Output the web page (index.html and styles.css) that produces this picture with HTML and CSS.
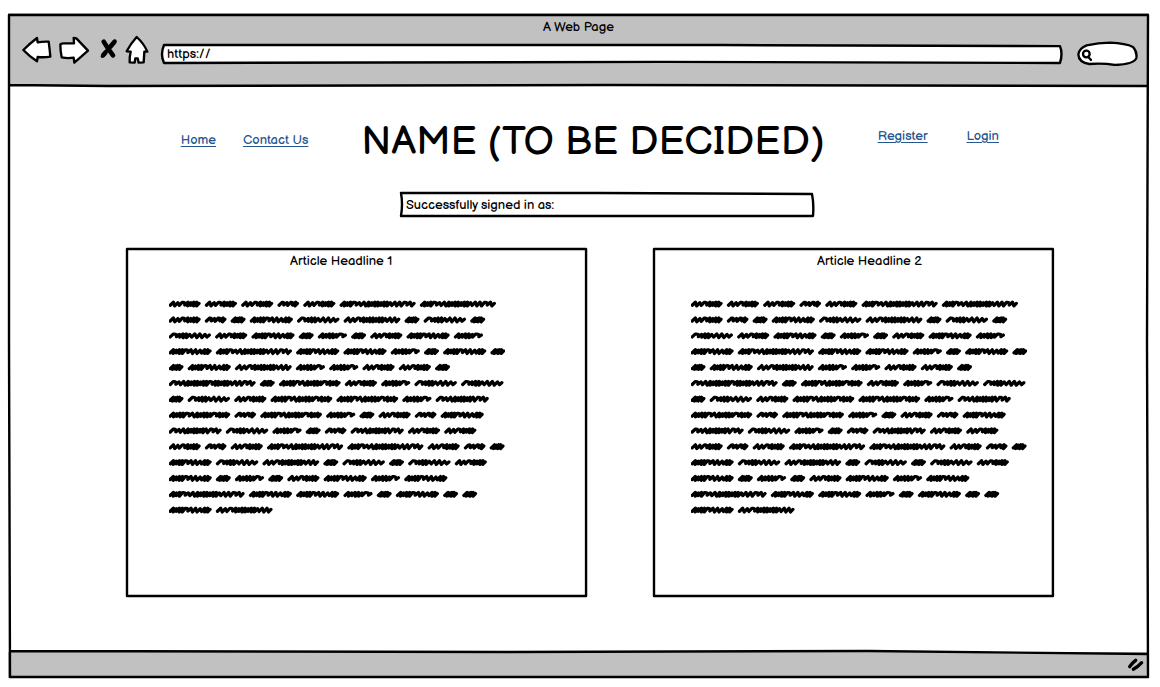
FILE: index.html
```html
<!DOCTYPE html>
<html lang="en">
<head>
<meta charset="utf-8">
<meta name="viewport" content="width=device-width, initial-scale=1">
<title>A Web Page</title>
<link rel="stylesheet" href="styles.css">
</head>
<body>
<div class="window">
  <div class="toolbar">
    <p class="window-title">A Web Page</p>
    <div class="controls">
      <button class="icon-button back" type="button" aria-label="Back">
        <svg class="icon arrow" viewBox="66 105 90 90"><path d="M70 150Q90 130 111 114L113 127Q130 124 146 125Q149 147 151 170Q132 173 113 171L111 184Q88 169 70 150Z"/></svg>
      </button>
      <button class="icon-button forward" type="button" aria-label="Forward">
        <svg class="icon arrow" viewBox="177 105 90 90"><path d="M181 133Q183 130 190 130L222 130L221 114L229 115Q245 132 264 152Q244 170 223 188L221 173Q203 176 185 172Q181 152 181 133Z"/></svg>
      </button>
      <button class="icon-button stop" type="button" aria-label="Stop">
        <svg class="icon cross" viewBox="297 105 60 90"><path class="thick" d="M311 125Q324 147 339 166"/><path d="M345 123Q324 145 307 169"/><path class="thick" d="M343 126L331 140M310 165L316 158"/></svg>
      </button>
      <button class="icon-button home" type="button" aria-label="Home page">
        <svg class="icon house" viewBox="375 105 72 90"><path d="M410 111Q392 131 380 154L392 155Q388 171 389 187L404 188L406 175L413 175L416 188L431 187L433 155L442 155Q432 131 410 111Z"/></svg>
      </button>
      <div class="field address">
        <svg class="frame" viewBox="0 0 900 19" preserveAspectRatio="none" aria-hidden="true"><path d="M3 1L300 1L560 1L897 2Q900 9 897 18L500 17L3 18Q-1 10 3 1Z"/></svg>
        <input class="text-input" type="text" aria-label="Address" value="https://">
      </div>
      <div class="search">
        <svg class="icon pill" viewBox="111 123 183 75" aria-hidden="true"><path d="M115 163Q118 144 140 136Q175 128 210 128Q258 130 279 141Q292 155 289 174Q284 192 225 195Q190 189 148 192Q116 187 115 163Z"/><circle cx="139" cy="162" r="10"/><path d="M145 171L153 180"/></svg>
        <input class="search-input" type="search" aria-label="Search">
      </div>
    </div>
  </div>

  <main class="content">
    <header class="site-header">
      <nav class="links left" aria-label="Main">
        <a href="#home">Home</a>
        <a href="#contact">Contact Us</a>
      </nav>
      <h1 class="site-name">NAME (TO BE DECIDED)</h1>
      <nav class="links right" aria-label="Account">
        <a href="#register">Register</a>
        <a href="#login">Login</a>
      </nav>
    </header>

    <div class="field status">
      <svg class="frame" viewBox="0 0 414 25" preserveAspectRatio="none" aria-hidden="true"><path d="M1 1L200 1L412 2Q414 12 413 24L250 24L1 24Q3 12 1 1Z"/></svg>
      <input class="text-input" type="text" aria-label="Sign-in status" value="Successfully signed in as:">
    </div>

    <div class="articles">
      <article class="card first">
        <svg class="frame" viewBox="0 0 460 348" preserveAspectRatio="none" aria-hidden="true"><path d="M1 1L150 1L459 1L459 180L459 347L230 347L1 347Z"/></svg>
        <h2 class="headline">Article Headline 1</h2>
        <svg class="scribble" viewBox="0 0 336 218" role="img" aria-label="Article text"></svg>
      </article>
      <article class="card second">
        <svg class="frame" viewBox="0 0 400 348" preserveAspectRatio="none" aria-hidden="true"><path d="M1 1L150 1L399 1L399 180L399 347L200 347L1 347Z"/></svg>
        <h2 class="headline">Article Headline 2</h2>
        <svg class="scribble" viewBox="0 0 336 218" role="img" aria-label="Article text"></svg>
      </article>
    </div>
  </main>

  <footer class="status-bar">
    <svg class="icon grip" viewBox="292 238 54 42" aria-hidden="true"><path d="M300 264Q307 253 318 245M311 272Q323 266 336 252"/></svg>
  </footer>

  <svg class="frame" viewBox="0 0 1141 665" preserveAspectRatio="none" aria-hidden="true"><path d="M1 2L570 2L1140 2L1139 330L1140 664L700 664L300 664L2 664L1 330ZM1 72L100 73L600 72L1140 73M1 638L500 639L860 638L1140 641"/></svg>
</div>
<script src="scribble.js"></script>
</body>
</html>
```
FILE: styles.css
```css
* {
  box-sizing: border-box;
}

body {
  margin: 0;
  padding: 13px 11px 9px 8px;
  background: #fff;
  color: #000;
  font-family: "Balsamiq Sans", Inter, "Open Sans", sans-serif;
  font-size: 13px;
  line-height: 16px;
}

.window {
  position: relative;
  display: flex;
  flex-direction: column;
  min-height: calc(100vh - 22px);
}

.frame {
  position: absolute;
  inset: 0;
  width: 100%;
  height: 100%;
  overflow: visible;
  pointer-events: none;
}

.frame path {
  fill: none;
  stroke: #000;
  stroke-width: 2.4;
  stroke-linejoin: round;
  vector-effect: non-scaling-stroke;
}

.icon {
  display: block;
  fill: #fff;
  stroke: #000;
  stroke-width: 7;
  stroke-linecap: round;
  stroke-linejoin: round;
}

.toolbar {
  padding: 6px 11px 20px 14px;
  background: #c1c1c1;
}

.window-title {
  margin: 0;
  padding-right: 3px;
  text-align: center;
}

.controls {
  display: flex;
  align-items: flex-start;
}

.icon-button {
  flex: none;
  padding: 0;
  border: 0;
  background: none;
  height: 30px;
}

.icon-button .icon {
  height: 30px;
}

.back {
  margin-right: 7px;
}

.forward {
  margin-right: 10px;
}

.arrow {
  width: 30px;
}

.cross {
  width: 20px;
}

.cross path {
  fill: none;
  stroke-width: 10;
}

.cross .thick {
  stroke-width: 14;
}

.stop {
  margin-right: 6px;
}

.house {
  width: 24px;
}

.field {
  position: relative;
  display: flex;
}

.field .frame path {
  fill: #fff;
}

.text-input {
  position: relative;
  flex: 1;
  min-width: 0;
  padding: 0 6px;
  border: 0;
  background: none;
  color: inherit;
  font: inherit;
  outline-offset: 2px;
}

.address {
  flex: 1;
  height: 20px;
  margin: 9px 14px 0 12px;
}

.search {
  position: relative;
  flex: none;
  margin-top: 6px;
}

.pill {
  width: 61px;
  height: 25px;
}

.pill circle {
  stroke-width: 7;
}

.search-input {
  position: absolute;
  inset: 4px 6px 4px 18px;
  width: 36px;
  padding: 0;
  border: 0;
  background: none;
  font: inherit;
  appearance: none;
}

.content {
  flex: 1;
  padding: 32px 95px 55px 118px;
}

.site-header {
  display: grid;
  grid-template-columns: 1fr auto 1fr;
  align-items: center;
  column-gap: 53px;
  margin-left: 6px;
}

.site-name {
  margin: 0;
  font-size: 40px;
  font-weight: 500;
  line-height: 48px;
  white-space: nowrap;
}

.links {
  display: flex;
  white-space: nowrap;
}

.links a {
  color: #26568f;
  text-underline-offset: 2px;
}

.left {
  justify-content: flex-end;
  gap: 27px;
  padding-bottom: 4px;
}

.right {
  gap: 39px;
  padding-bottom: 12px;
}

.status {
  width: 45%;
  max-width: 414px;
  height: 25px;
  margin: 26px 240px 31px auto;
}

.articles {
  display: grid;
  grid-template-columns: 460fr 400fr;
  gap: 66px;
}

.card {
  position: relative;
  min-width: 0;
  padding: 5px 20px 80px 43px;
}

.second {
  padding-right: 24px;
  padding-left: 38px;
}

.headline {
  margin: 0 0 30px;
  font-size: 13px;
  font-weight: 400;
  line-height: 16px;
}

.first .headline {
  padding-left: 121px;
}

.second .headline {
  padding-left: 126px;
}

.scribble {
  display: block;
  width: 100%;
  max-width: 336px;
  fill: none;
  stroke: #000;
  stroke-width: 3.3;
  stroke-linecap: round;
  stroke-linejoin: round;
}

.status-bar {
  display: flex;
  justify-content: flex-end;
  align-items: center;
  height: 26px;
  padding-right: 4px;
  background: #c1c1c1;
}

.grip {
  width: 18px;
  height: 14px;
  fill: none;
  stroke-width: 10;
}
```
FILE: scribble.js
```js
// Each letter stands for one scribbled word. The shape string lists its teeth:
// "-" is an open stroke, "=" a tight one, "~" a rounded shoulder.
const words = {
  a: { width: 31, shape: "--~====" },
  b: { width: 20.5, shape: "~-~=" },
  c: { width: 13.8, shape: "===-" },
  d: { width: 42, shape: "====~---==" },
  e: { width: 41.3, shape: "~===----" },
  f: { width: 28, shape: "=====~" },
  g: { width: 75, shape: "===~--=======---~-" },
  h: { width: 60.6, shape: "====~-=====~===" },
  i: { width: 55.6, shape: "--~=======---" },
  j: { width: 52, shape: "~--======-~-" },
  k: { width: 86, shape: "~--=======~=====---~-" }
};

const lines = [
  "aaabagg", "abcdeicec", "eadcfcadf", "dgddfcdc", "cdiffaac", "kchafee",
  "ceahhfj", "hbhfcabd", "jefcbjaa", "abaggabc", "deicecea",
  "dcfcadfd", "gddfcdcc", "di"
];

const pitch = { "-": 4.4, "=": 2.9, "~": 5.4 };

function drawWord(x, y, word) {
  const total = [...word.shape].reduce((sum, t) => sum + pitch[t], 0);
  const scale = (word.width - 4.6) / total;
  let cx = x + 1.2;
  let d = `M${cx} ${y + 1.2}`;
  [...word.shape].forEach((tooth, i) => {
    const step = pitch[tooth] * scale;
    const lift = i % 3 === 1 ? 0.5 : 0;
    if (tooth === "~") {
      d += `L${cx + 3} ${y - 1.6}Q${cx + step + 1} ${y - 2} ${cx + step} ${y + 1}`;
    } else {
      d += `L${cx + 3.2} ${y - 1.8 + lift}L${cx + step} ${y + 1.9 - lift}`;
    }
    cx += step;
  });
  return d + `L${cx + 2.4} ${y - 0.6}`;
}

function drawLines() {
  return lines.map((line, row) => {
    let x = 0;
    return [...line].map((key) => {
      const d = drawWord(x, 5 + row * 15.85, words[key]);
      x += words[key].width + 5.3;
      return d;
    }).join("");
  }).join("");
}

for (const svg of document.querySelectorAll(".scribble")) {
  const path = document.createElementNS("http://www.w3.org/2000/svg", "path");
  path.setAttribute("d", drawLines());
  svg.append(path);
}
```
